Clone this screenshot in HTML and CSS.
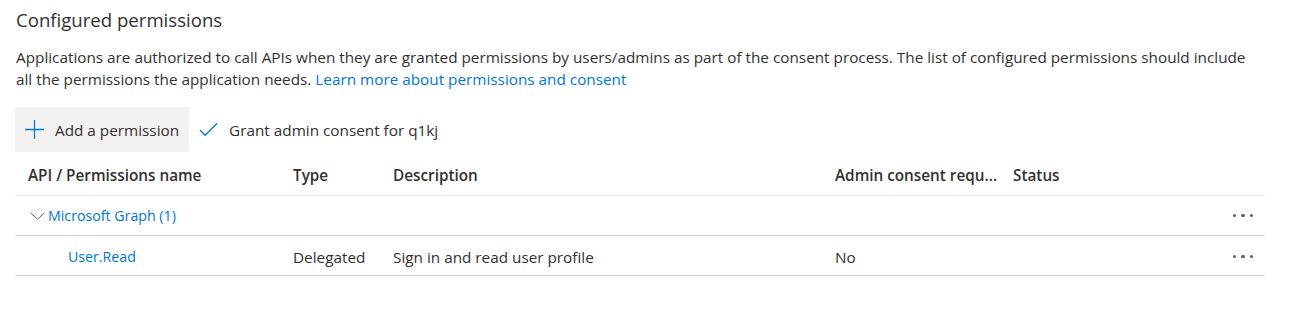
FILE: index.html
```html
<!DOCTYPE html>
<html lang="en">
<head>
    <meta charset="UTF-8">
    <title>Configured permissions</title>
    <link rel="stylesheet" href="styles.css">
</head>
<body>
    <div class="section">
        <h2 class="title">Configured permissions</h2>
        <p class="intro"><span>Applications are authorized to call APIs when they are granted permissions by users/admins as part of the consent process. The list of configured permissions should include</span> <span>all the permissions the application needs.</span> <a class="learn" href="#">Learn more about permissions and consent</a></p>

        <div class="commands">
            <button class="cmd cmd-active">
                <svg class="icon" viewBox="0 0 18 18"><path d="M9 0v18M0 9h18" stroke="#0078d4" stroke-width="1.2" fill="none"/></svg>
                <span>Add a permission</span>
            </button>
            <button class="cmd">
                <svg class="icon" viewBox="0 0 20 16"><path d="M1 8.5l5.5 5.5L19 1.5" stroke="#0078d4" stroke-width="1.4" fill="none"/></svg>
                <span>Grant admin consent for q1kj</span>
            </button>
        </div>

        <div class="list">
            <div class="row head">
                <div class="cell">API / Permissions name</div>
                <div class="cell">Type</div>
                <div class="cell">Description</div>
                <div class="cell">Admin consent requ...</div>
                <div class="cell">Status</div>
                <div class="cell"></div>
            </div>
            <div class="row group">
                <div class="cell name">
                    <svg class="chevron" viewBox="0 0 16 8"><path d="M0.5 0.5L8 7.5L15.5 0.5" stroke="#605e5c" stroke-width="1" fill="none"/></svg>
                    <a href="#">Microsoft Graph (1)</a>
                </div>
                <div class="cell"></div>
                <div class="cell"></div>
                <div class="cell"></div>
                <div class="cell"></div>
                <div class="cell more"><span></span><span></span><span></span></div>
            </div>
            <div class="row item">
                <div class="cell name"><a href="#">User.Read</a></div>
                <div class="cell">Delegated</div>
                <div class="cell">Sign in and read user profile</div>
                <div class="cell">No</div>
                <div class="cell"></div>
                <div class="cell more"><span></span><span></span><span></span></div>
            </div>
        </div>
    </div>
</body>
</html>
```

FILE: styles.css
```css
body {
    font-family: "Open Sans", "Noto Sans", sans-serif;
    color: #323130;
    background-color: #fff;
    margin: 0;
}

a {
    color: #0078d4;
    text-decoration: none;
}

.section {
    padding: 0 42px 0 16px;
}

.title {
    font-size: 18.6px;
    font-weight: 400;
    line-height: 28px;
    margin: 6px 0 0 0;
}

.intro {
    font-size: 15.3px;
    line-height: 22px;
    margin: 12px 0 0 0;
    max-width: 1252px;
}

.learn {
    display: inline-block;
}

.commands {
    display: flex;
    margin: 17px 0 0 -1px;
    height: 45px;
}

.cmd {
    display: flex;
    align-items: center;
    gap: 11px;
    border: none;
    background: none;
    font: inherit;
    font-size: 15.3px;
    color: #323130;
    padding: 0 10px;
}

.cmd-active {
    background-color: #f3f2f1;
}

.icon {
    width: 19px;
    height: 19px;
}

.list {
    width: 1250px;
    margin-left: -1px;
    font-size: 15.3px;
}

.row {
    display: grid;
    grid-template-columns: 265px 100px 442px 178px 1fr 40px;
    padding-left: 13px;
    align-items: center;
    border-bottom: 1px solid #d2d0ce;
}

.head {
    height: 44px;
    padding-top: 3px;
    box-sizing: border-box;
    font-weight: 600;
    border-bottom-color: #edebe9;
}

.group, .item {
    height: 39px;
}

.item {
    padding-top: 2px;
    box-sizing: border-box;
    height: 40px;
}

.name {
    display: flex;
    align-items: center;
}

.name a {
    font-size: 14.2px;
}

.group .name {
    padding-left: 2px;
}

.chevron {
    width: 15px;
    height: 8px;
    margin-right: 3px;
}

.item .name {
    padding-left: 40px;
}

.more {
    display: flex;
    justify-content: flex-end;
    gap: 5px;
    padding-right: 12px;
}

.more span {
    width: 3.5px;
    height: 3.5px;
    border-radius: 50%;
    background-color: #605e5c;
}
```
